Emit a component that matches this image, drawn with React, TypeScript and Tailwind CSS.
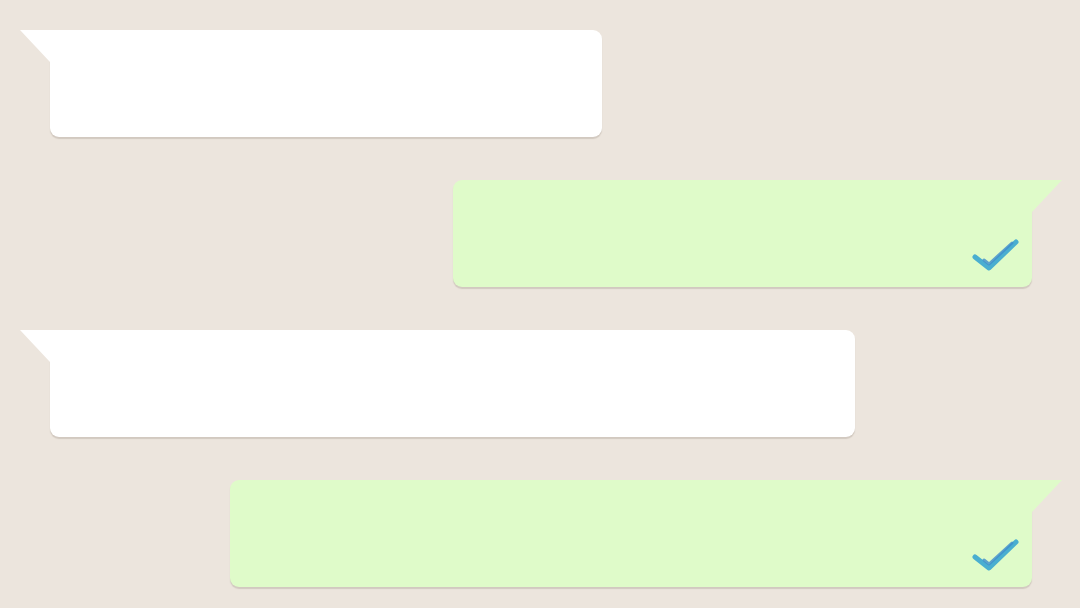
import React from "react";

type Msg = { id: number; out: boolean; width: string };

const messages: Msg[] = [
  { id: 1, out: false, width: "w-[552px]" },
  { id: 2, out: true, width: "w-[579px]" },
  { id: 3, out: false, width: "w-[805px]" },
  { id: 4, out: true, width: "w-[802px]" },
];

const DoubleCheck = () => (
  <svg width="48" height="34" viewBox="0 0 48 34" fill="none">
    <path d="M3 18 L17 29 L44 3" stroke="#4aaed0" strokeWidth="5" strokeLinecap="round" strokeLinejoin="round" />
    <path d="M12 21 L17 25 L40 4" stroke="#3d8ccc" strokeWidth="3" strokeLinecap="round" strokeLinejoin="round" opacity="0.8" />
  </svg>
);

const Bubble = ({ msg }: { msg: Msg }) => {
  const color = msg.out ? "#dffbc9" : "#ffffff";
  return (
    <div className={`flex ${msg.out ? "justify-end pr-[48px]" : "justify-start pl-[50px]"}`}>
      <div
        className={`relative h-[107px] ${msg.width} shadow-[0_2px_1px_rgba(120,105,90,0.22)] ${
          msg.out ? "bg-[#dffbc9] rounded-b-[9px] rounded-tl-[9px]" : "bg-white rounded-b-[9px] rounded-tr-[9px]"
        }`}
      >
        {msg.out ? (
          <svg className="absolute top-0 -right-[30px]" width="30" height="32" viewBox="0 0 30 32">
            <path d="M0 0 L30 0 L0 32 Z" fill={color} />
          </svg>
        ) : (
          <svg className="absolute top-0 -left-[30px]" width="30" height="32" viewBox="0 0 30 32">
            <path d="M0 0 L30 0 L30 32 Z" fill={color} />
          </svg>
        )}
        {msg.out && (
          <div className="absolute right-[12px] bottom-[14px]">
            <DoubleCheck />
          </div>
        )}
      </div>
    </div>
  );
};

const App = () => {
  return (
    <div className="w-[1080px] h-[608px] overflow-hidden bg-[#ece5dd] pt-[30px] flex flex-col gap-[43px]">
      {messages.map((m) => (
        <Bubble key={m.id} msg={m} />
      ))}
    </div>
  );
};

export default App;
